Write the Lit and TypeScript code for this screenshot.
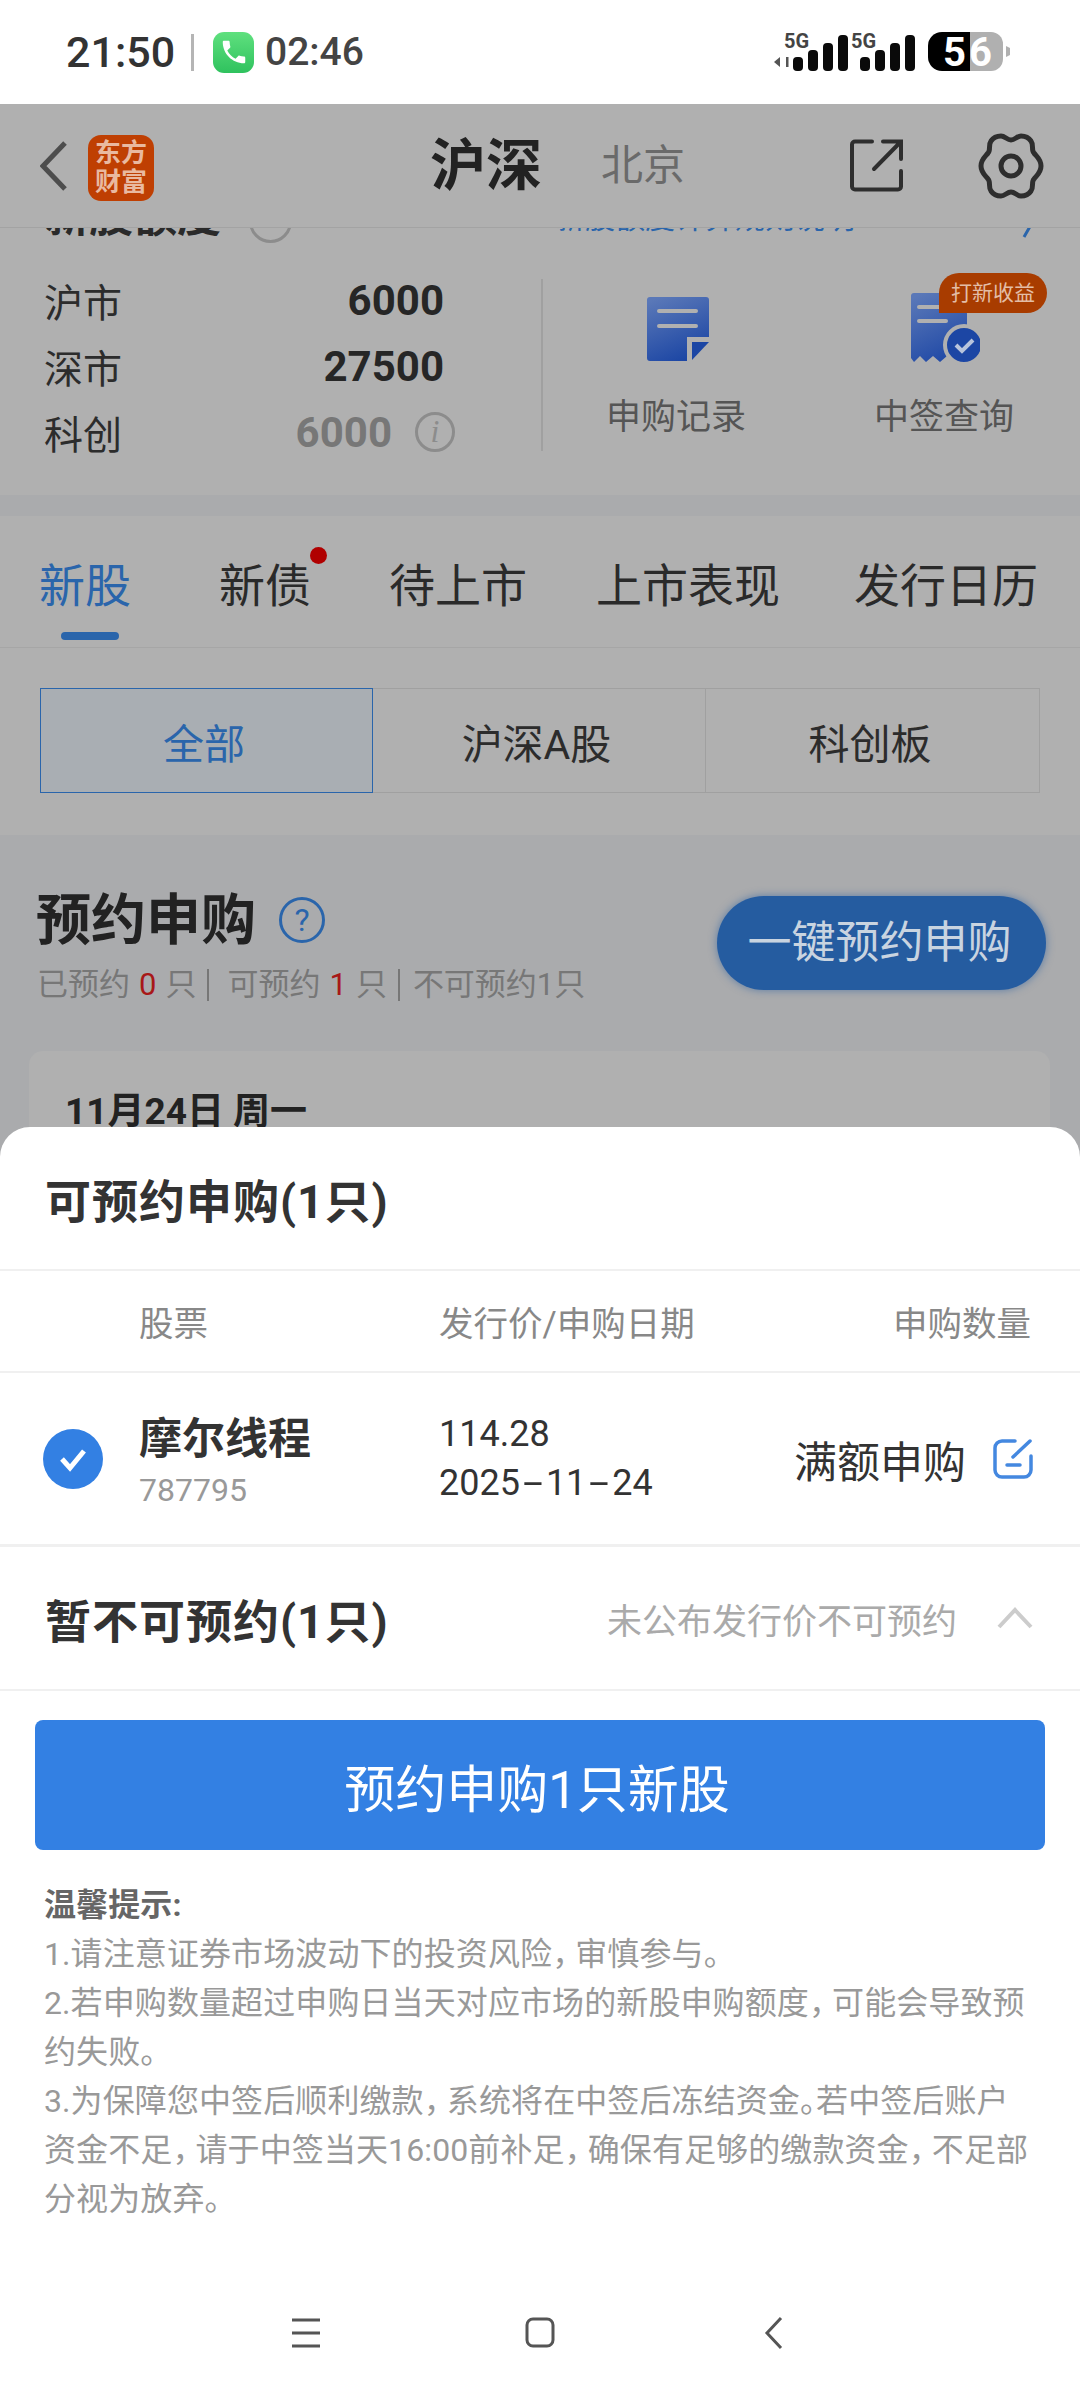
import { LitElement, css, html, svg } from "lit";
import { customElement } from "lit/decorators.js";

const bars = (x: number) =>
  [14, 21, 28, 36].map(
    (h, i) => svg`<rect x=${x + i * 15} y=${71 - h} width="10" height=${h} rx="4" fill="#0a0a0a"></rect>`
  );

// commas in the tips sit a little wider than a halved glyph
const tip = (text: string) =>
  text.split("，").map((part, i) => (i === 0 ? part : html`<span class="cm">，</span>${part}`));

@customElement("app-root")
export class AppRoot extends LitElement {
  static styles = css`
    :host {
      display: block;
      width: 1080px;
      height: 2400px;
      font-family: Roboto, "Noto Sans CJK SC", sans-serif;
    }
    * {
      box-sizing: border-box;
    }
    .screen {
      position: relative;
      width: 1080px;
      height: 2400px;
      overflow: hidden;
      display: flex;
      flex-direction: column;
      background: #aaabad;
    }

    /* status bar */
    .status {
      height: 104px;
      background: #fff;
      display: flex;
      align-items: center;
      padding-left: 66px;
    }
    .clock {
      font-size: 43px;
      font-weight: 500;
      color: #333;
      line-height: 104px;
      width: 125px;
    }
    .sep {
      width: 3px;
      height: 37px;
      background: #b5b5b5;
    }
    .phone {
      width: 41px;
      height: 41px;
      margin-left: 19px;
      border-radius: 11px;
      background: linear-gradient(#5fe07e, #2fc25e);
      display: flex;
      align-items: center;
      justify-content: center;
    }
    .call {
      font-size: 39px;
      font-weight: 500;
      color: #444;
      margin-left: 11px;
    }
    .sys {
      margin-left: auto;
      margin-right: 60px;
      display: block;
    }

    /* app bar */
    .bar {
      height: 124px;
      background: #b0b0b0;
      border-bottom: 1px solid #a3a3a3;
      display: flex;
      align-items: center;
      padding-left: 40px;
    }
    .logo {
      width: 66px;
      height: 66px;
      margin-left: 21px;
      margin-top: 4px;
      border-radius: 13px;
      background: #bf3f02;
      color: #e9b9a0;
      font-size: 26px;
      font-weight: 700;
      line-height: 29px;
      text-align: center;
      padding-top: 4px;
    }
    .title {
      margin-left: 276px;
      font-size: 56px;
      font-weight: 700;
      color: #222;
      width: 171px;
      line-height: 64px;
    }
    .city {
      font-size: 42px;
      color: #6a6a6a;
      width: 249px;
      line-height: 64px;
    }
    .gear {
      margin-left: 72px;
    }

    /* quota */
    .quota {
      height: 267px;
      background: #b0b0b0;
      position: relative;
    }
    .clip {
      height: 15px;
      overflow: hidden;
      display: flex;
      align-items: flex-end;
      padding-left: 45px;
    }
    .clip-title {
      flex: none;
      width: 204px;
      font-size: 44px;
      font-weight: 700;
      color: #2a2a2a;
      line-height: 52px;
    }
    .clip-link {
      flex: none;
      width: 295px;
      margin-left: 263px;
      margin-bottom: 5px;
      font-size: 30px;
      color: #2a65ab;
      line-height: 40px;
      white-space: nowrap;
    }
    .clip-more {
      flex: none;
      margin-left: 166px;
      margin-bottom: 5px;
    }
    .quota-body {
      display: flex;
      align-items: flex-start;
    }
    .limits {
      width: 541px;
      padding: 24px 0 0 44px;
    }
    .limit {
      display: flex;
      align-items: center;
      height: 66px;
      width: 411px;
      font-size: 39px;
      color: #2c2c2c;
    }
    .limit-name {
      flex: 1;
    }
    .limit-val {
      font-size: 42px;
      font-weight: 700;
      color: #262626;
    }
    .limit-val.off {
      color: #777;
    }
    .slot {
      width: 11px;
    }
    .slot.wide {
      width: 63px;
      display: flex;
      justify-content: flex-end;
    }
    .info {
      width: 40px;
      height: 40px;
      border-radius: 50%;
      border: 3px solid #8c8c8c;
      color: #8c8c8c;
      font-family: "Liberation Serif", serif;
      font-style: italic;
      font-size: 32px;
      line-height: 33px;
      text-align: center;
    }
    .rule {
      flex: none;
      width: 2px;
      height: 172px;
      margin-top: 36px;
      background: #a0a0a0;
    }
    .entries {
      display: grid;
      grid-template-columns: 266px 270px;
    }
    .entry {
      position: relative;
      display: flex;
      flex-direction: column;
      align-items: center;
      padding-top: 50px;
      font-size: 35px;
      color: #555;
      line-height: 44px;
    }
    .entry svg {
      display: block;
      margin-bottom: 31px;
    }
    .earn {
      position: absolute;
      left: 130px;
      top: 30px;
      width: 108px;
      height: 40px;
      border-radius: 20px 20px 20px 0;
      background: #a83c00;
      color: #e3bda6;
      font-size: 21px;
      line-height: 40px;
      text-align: center;
    }

    /* tabs */
    .market {
      margin-top: 21px;
      height: 319px;
      background: #b0b0b0;
    }
    .tabs {
      display: grid;
      grid-template-columns: 170px 190px 196px 264px 252px;
      height: 132px;
      border-bottom: 1px solid #a6a6a6;
    }
    .tab {
      position: relative;
      display: flex;
      flex-direction: column;
      align-items: center;
      padding-top: 43px;
      font-size: 46px;
      line-height: 54px;
      color: #2a2a2a;
      white-space: nowrap;
    }
    .tab.on {
      color: #2a65ab;
    }
    .mark {
      width: 58px;
      height: 8px;
      margin: 19px 0 0 9px;
      border-radius: 4px;
      background: #2a65ab;
    }
    .dot {
      position: absolute;
      left: 140px;
      top: 31px;
      width: 17px;
      height: 17px;
      border-radius: 50%;
      background: #b00000;
    }
    .segs {
      display: grid;
      grid-template-columns: 333px 333px 334px;
      margin: 40px 40px 0;
      height: 105px;
    }
    .seg {
      display: flex;
      align-items: center;
      justify-content: center;
      border: 1px solid #a0a0a0;
      margin-left: -1px;
      padding-right: 5px;
      font-size: 41px;
      color: #2c2c2c;
    }
    .seg.on {
      position: relative;
      margin-left: 0;
      border-color: #2a65ab;
      background: #a9aeb3;
      color: #2a65ab;
    }

    /* booking */
    .book {
      flex: 1;
      display: flex;
      flex-direction: column;
    }
    .book-head {
      display: flex;
      justify-content: space-between;
      align-items: flex-start;
      padding: 55px 34px 0 36px;
    }
    .book-title {
      display: flex;
      align-items: center;
      font-size: 55px;
      font-weight: 700;
      line-height: 60px;
      color: #222;
    }
    .help {
      width: 46px;
      height: 46px;
      margin-left: 23px;
      border-radius: 50%;
      border: 3px solid #2a65ab;
      color: #2a65ab;
      font-size: 32px;
      font-weight: 400;
      line-height: 40px;
      text-align: center;
    }
    .book-sub {
      display: flex;
      align-items: center;
      margin: 15px 0 0 1px;
      font-size: 31px;
      line-height: 40px;
      color: #777;
      white-space: nowrap;
    }
    .book-sub em {
      font-style: normal;
      color: #a81818;
      margin: 0 9px;
    }
    .pipe {
      width: 2px;
      height: 32px;
      margin: 0 18px 0 11px;
      background: #777;
    }
    .pipe.tight {
      margin-right: 13px;
    }
    .pill {
      margin-top: 6px;
      width: 329px;
      height: 94px;
      padding-right: 4px;
      border-radius: 47px;
      background: #255ca0;
      box-shadow: 0 0 8px rgba(37, 92, 160, 0.6);
      color: #c9d4e0;
      font-size: 44px;
      line-height: 94px;
      text-align: center;
    }
    .card {
      flex: 1;
      margin: 46px 30px 0 29px;
      padding: 39px 36px 0;
      border-radius: 14px;
      background: #b0b0b0;
      font-size: 37px;
      font-weight: 700;
      line-height: 44px;
      color: #222;
    }

    /* bottom sheet */
    .sheet {
      position: absolute;
      left: 0;
      right: 0;
      top: 1127px;
      bottom: 0;
      display: flex;
      flex-direction: column;
      background: #fff;
      border-radius: 30px 30px 0 0;
    }
    .sheet-title {
      height: 144px;
      padding-left: 45px;
      display: flex;
      align-items: center;
      border-bottom: 2px solid #f0f0f0;
      font-size: 46px;
      font-weight: 700;
      letter-spacing: 1px;
      color: #333;
    }
    .cols {
      display: grid;
      grid-template-columns: 96px 300px 1fr auto;
      align-items: center;
      padding: 0 46px 0 43px;
    }
    .thead {
      height: 102px;
      border-bottom: 2px solid #f0f0f0;
      font-size: 34.5px;
      color: #888;
    }
    .right {
      padding-right: 3px;
    }
    .row {
      height: 174px;
      border-bottom: 3px solid #f0f0f0;
    }
    .check {
      width: 60px;
      height: 60px;
      border-radius: 50%;
      background: #3380e3;
      display: flex;
      align-items: center;
      justify-content: center;
    }
    .stock {
      font-size: 43px;
      font-weight: 700;
      line-height: 54px;
      color: #333;
      margin-top: 6px;
    }
    .code {
      font-size: 32px;
      line-height: 44px;
      color: #999;
      margin-top: 2px;
    }
    .dates {
      font-size: 36px;
      line-height: 49px;
      color: #333;
      white-space: nowrap;
    }
    .dash {
      display: inline-block;
      margin: 0 8px;
      transform: scaleX(2);
    }
    .amount {
      display: flex;
      align-items: center;
      font-size: 43px;
      color: #333;
    }
    .amount svg {
      margin-left: 26px;
    }
    .later {
      height: 144px;
      display: flex;
      align-items: center;
      padding: 0 47px 0 45px;
      border-bottom: 2px solid #f0f0f0;
    }
    .later-title {
      font-size: 46px;
      font-weight: 700;
      letter-spacing: 1px;
      color: #333;
    }
    .later-note {
      margin-left: auto;
      font-size: 35px;
      color: #aaa;
    }
    .later svg {
      margin-left: 40px;
    }
    .submit {
      height: 130px;
      margin: 29px 35px 0;
      padding: 2px 6px 0 0;
      border-radius: 8px;
      background: #3380e3;
      color: #fff;
      font-size: 51px;
      display: flex;
      align-items: center;
      justify-content: center;
    }
    .tips {
      margin-top: 31px;
      padding: 0 45px 0 44px;
      font-size: 32px;
      line-height: 49px;
      letter-spacing: 0.1px;
      color: #999;
      font-feature-settings: "halt";
    }
    .tips b {
      color: #666;
      font-weight: 700;
    }
    .cm {
      margin-right: 7px;
    }
    .nav {
      margin-top: auto;
      height: 134px;
      display: flex;
      align-items: center;
      justify-content: center;
      gap: 194px;
    }
  `;

  render() {
    return html`
      <div class="screen">
        <div class="status">
          <span class="clock">21:50</span>
          <span class="sep"></span>
          <span class="phone">
            <svg width="30" height="30" viewBox="0 0 24 24" fill="#fff">
              <path d="M6.62 10.79c1.44 2.83 3.76 5.14 6.59 6.59l2.2-2.2c.27-.27.67-.36 1.02-.24 1.12.37 2.33.57 3.57.57.55 0 1 .45 1 1V20c0 .55-.45 1-1 1-9.39 0-17-7.61-17-17 0-.55.45-1 1-1h3.5c.55 0 1 .45 1 1 0 1.25.2 2.45.57 3.57.11.35.03.74-.25 1.02l-2.2 2.2z"></path>
            </svg>
          </span>
          <span class="call">02:46</span>
          <svg class="sys" width="260" height="104" viewBox="0 0 260 104">
            <text x="24" y="48" font-size="20" font-weight="700" fill="#444" font-family="Roboto, sans-serif">5G</text>
            <path d="M20 57v10l-6-5z" fill="#555"></path>
            <rect x="26" y="57" width="2.5" height="10" fill="#555"></rect>
            ${bars(33)}
            <text x="91" y="48" font-size="20" font-weight="700" fill="#444" font-family="Roboto, sans-serif">5G</text>
            ${bars(100)}
            <path d="M182 32h28v39h-28a14 14 0 0 1-14-14V46a14 14 0 0 1 14-14z" fill="#000"></path>
            <path d="M210 32h21a12 12 0 0 1 12 12v15a12 12 0 0 1-12 12h-21z" fill="#b0b0b0"></path>
            <path d="M246 46l4 2v7l-4 2z" fill="#b0b0b0"></path>
            <text y="66" font-size="40" font-weight="700" fill="#fff" font-family="Roboto, sans-serif" x="183 209">56</text>
          </svg>
        </div>

        <div class="bar">
          <svg width="27" height="50" viewBox="0 0 27 50" fill="none" stroke="#4d4d4d" stroke-width="5">
            <path d="M25 2L3 25l22 23"></path>
          </svg>
          <div class="logo">东方<br />财富</div>
          <div class="title">沪深</div>
          <div class="city">北京</div>
          <svg width="56" height="56" viewBox="0 0 56 56" fill="none" stroke="#2e2e2e" stroke-width="4" stroke-linecap="round">
            <path d="M22 3.5H5a3 3 0 0 0-3 3v42a3 3 0 0 0 3 3h43a3 3 0 0 0 3-3V33"></path>
            <path d="M33 3.5h18V21M51 3.5L24 31"></path>
          </svg>
          <svg class="gear" width="66" height="66" viewBox="0 0 66 66" fill="none" stroke="#2e2e2e" stroke-width="5">
            <path d="M33 7C37 7 39 3 43 3C47 3 51 5 53 8C56 12 53 17 56 20C58 23 63 26 63 33C63 40 58 43 56 46C53 49 56 54 53 58C51 61 47 63 43 63C39 63 37 59 33 59C29 59 27 63 23 63C19 63 15 61 13 58C10 54 13 49 10 46C8 43 3 40 3 33C3 26 8 23 10 20C13 17 10 12 13 8C15 5 19 3 23 3C27 3 29 7 33 7Z"></path>
            <circle cx="33" cy="33" r="10"></circle>
          </svg>
        </div>

        <div class="quota">
          <div class="clip">
            <div class="clip-title">新股额度</div>
            <svg width="43" height="43" viewBox="0 0 43 43" fill="none" stroke="#8c8c8c" stroke-width="3" style="flex:none">
              <circle cx="21.5" cy="21.5" r="20"></circle>
            </svg>
            <div class="clip-link">新股额度计算规则说明</div>
            <svg class="clip-more" width="20" height="30" viewBox="0 0 20 30" fill="none" stroke="#2a65ab" stroke-width="3">
              <path d="M3 1l13 14L8 29"></path>
            </svg>
          </div>
          <div class="quota-body">
            <div class="limits">
              <div class="limit"><span class="limit-name">沪市</span><span class="limit-val">6000</span><span class="slot"></span></div>
              <div class="limit"><span class="limit-name">深市</span><span class="limit-val">27500</span><span class="slot"></span></div>
              <div class="limit">
                <span class="limit-name">科创</span><span class="limit-val off">6000</span>
                <span class="slot wide"><span class="info">i</span></span>
              </div>
            </div>
            <div class="rule"></div>
            <div class="entries">
              <div class="entry">
                <svg width="72" height="72" viewBox="0 0 72 72">
                  <defs>
                    <linearGradient id="docFill" x1="0.2" y1="0" x2="0.6" y2="1">
                      <stop offset="0" stop-color="#5a78b8"></stop>
                      <stop offset="1" stop-color="#1c46a4"></stop>
                    </linearGradient>
                  </defs>
                  <path d="M10 4h56a3 3 0 0 1 3 3v37H47v24H10a3 3 0 0 1-3-3V7a3 3 0 0 1 3-3z" fill="url(#docFill)"></path>
                  <path d="M52 49h17L52 67z" fill="#1c46a4"></path>
                  <path d="M19 18h37M19 33h37" stroke="#b0b0b0" stroke-width="4" stroke-linecap="round"></path>
                </svg>
                申购记录
              </div>
              <div class="entry">
                <svg width="72" height="72" viewBox="0 0 72 72">
                  <defs>
                    <linearGradient id="slipFill" x1="0.2" y1="0" x2="0.6" y2="1">
                      <stop offset="0" stop-color="#5a78b8"></stop>
                      <stop offset="1" stop-color="#2049a6"></stop>
                    </linearGradient>
                  </defs>
                  <path d="M6 0h50a3 3 0 0 1 3 3v66H45l-6-6-7 6-7-6-7 6-6-6-6 6-3-4V3a3 3 0 0 1 3-3z" fill="url(#slipFill)"></path>
                  <path d="M11 14h27M11 28h27" stroke="#b0b0b0" stroke-width="4" stroke-linecap="round"></path>
                  <circle cx="56" cy="52" r="19" fill="#1c46a4" stroke="#b0b0b0" stroke-width="4"></circle>
                  <path d="M48 52l6 6 11-11" fill="none" stroke="#b8c4dc" stroke-width="4"></path>
                </svg>
                中签查询
                <span class="earn">打新收益</span>
              </div>
            </div>
          </div>
        </div>

        <div class="market">
          <div class="tabs">
            <div class="tab on">新股<span class="mark"></span></div>
            <div class="tab">新债<span class="dot"></span></div>
            <div class="tab">待上市</div>
            <div class="tab">上市表现</div>
            <div class="tab">发行日历</div>
          </div>
          <div class="segs">
            <div class="seg on">全部</div>
            <div class="seg">沪深A股</div>
            <div class="seg">科创板</div>
          </div>
        </div>

        <div class="book">
          <div class="book-head">
            <div>
              <div class="book-title">预约申购<span class="help">?</span></div>
              <div class="book-sub">
                <span>已预约</span><em>0</em><span>只</span><i class="pipe"></i>
                <span>可预约</span><em>1</em><span>只</span><i class="pipe tight"></i>
                <span>不可预约1只</span>
              </div>
            </div>
            <div class="pill">一键预约申购</div>
          </div>
          <div class="card">11月24日 周一</div>
        </div>

        <div class="sheet">
          <div class="sheet-title">可预约申购(1只)</div>
          <div class="cols thead">
            <span></span>
            <span>股票</span>
            <span>发行价/申购日期</span>
            <span class="right">申购数量</span>
          </div>
          <div class="cols row">
            <span class="check">
              <svg width="34" height="34" viewBox="0 0 34 34" fill="none" stroke="#fff" stroke-width="5">
                <path d="M6 17l8 9L28 9"></path>
              </svg>
            </span>
            <div>
              <div class="stock">摩尔线程</div>
              <div class="code">787795</div>
            </div>
            <div class="dates">114.28<br />2025<span class="dash">-</span>11<span class="dash">-</span>24</div>
            <div class="amount">
              满额申购
              <svg width="42" height="42" viewBox="0 0 42 42" fill="none" stroke="#4488e0" stroke-width="3.5" stroke-linecap="round">
                <path d="M23 3H10a7 7 0 0 0-7 7v22a7 7 0 0 0 7 7h22a7 7 0 0 0 7-7V18"></path>
                <path d="M21 19L38 3M15 27h13"></path>
              </svg>
            </div>
          </div>
          <div class="later">
            <span class="later-title">暂不可预约(1只)</span>
            <span class="later-note">未公布发行价不可预约</span>
            <svg width="36" height="22" viewBox="0 0 36 22" fill="none" stroke="#ccc" stroke-width="4">
              <path d="M2 20L18 3l16 17"></path>
            </svg>
          </div>
          <div class="submit">预约申购1只新股</div>
          <div class="tips">
            <b>温馨提示:</b><br />
            ${tip("1.请注意证券市场波动下的投资风险，审慎参与。")}<br />
            ${tip("2.若申购数量超过申购日当天对应市场的新股申购额度，可能会导致预约失败。")}<br />
            ${tip("3.为保障您中签后顺利缴款，系统将在中签后冻结资金。若中签后账户资金不足，请于中签当天16:00前补足，确保有足够的缴款资金，不足部分视为放弃。")}
          </div>
          <div class="nav">
            <svg width="40" height="40" viewBox="0 0 40 40" stroke="#555" stroke-width="3">
              <path d="M6 7h28M6 20h28M6 33h28"></path>
            </svg>
            <svg width="40" height="40" viewBox="0 0 40 40" fill="none" stroke="#555" stroke-width="3">
              <rect x="7" y="6" width="26" height="27" rx="6"></rect>
            </svg>
            <svg width="40" height="40" viewBox="0 0 40 40" fill="none" stroke="#555" stroke-width="3">
              <path d="M27 5L13 20l14 15"></path>
            </svg>
          </div>
        </div>
      </div>
    `;
  }
}
